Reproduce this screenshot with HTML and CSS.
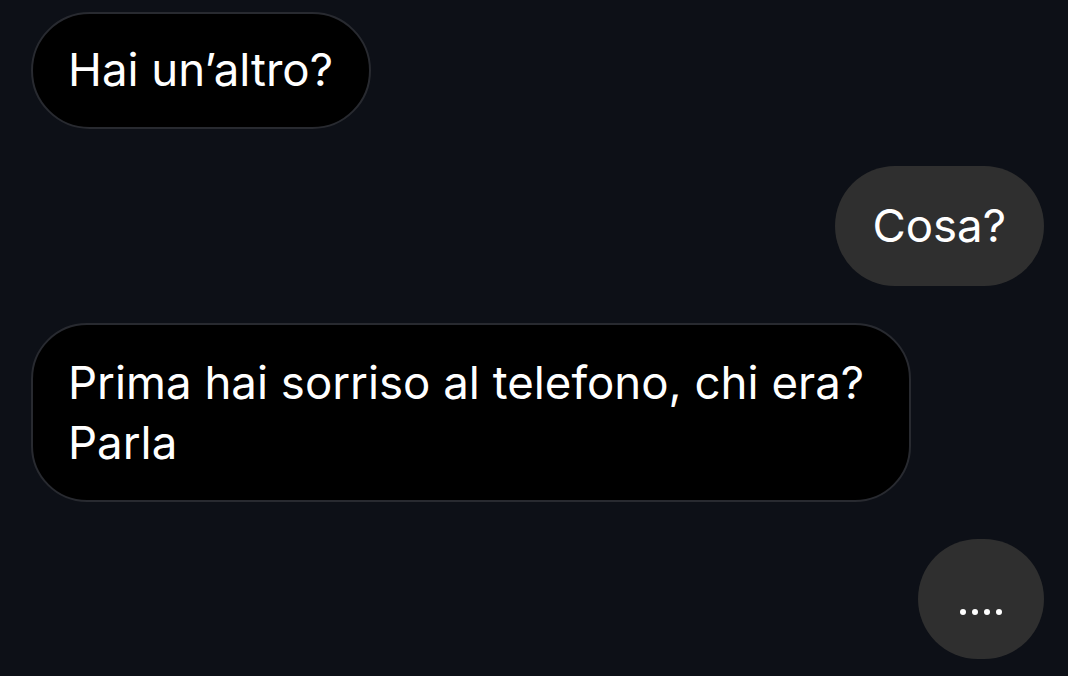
FILE: index.html
```html
<!DOCTYPE html>
<html lang="it">
  <head>
    <meta charset="UTF-8" />
    <meta name="viewport" content="width=device-width, initial-scale=1.0" />
    <title>Chat</title>
    <link rel="stylesheet" href="styles.css">
  </head>
  <body>
    <div id="thread">
      <div class="bubble in">Hai un’altro?</div>
      <div class="bubble out">Cosa?</div>
      <div class="bubble in wide">Prima hai sorriso al telefono, chi era? Parla</div>
      <div class="bubble out typing">
        <span class="dot"></span><span class="dot"></span><span class="dot"></span><span class="dot"></span>
      </div>
    </div>
  </body>
</html>
```

FILE: styles.css
```css
* {
  box-sizing: border-box;
  margin: 0;
  padding: 0;
}
body {
  width: 100vw;
  height: 100vh;
  overflow: hidden;
  background-color: #0d1017;
  font-family: Inter, Roboto, "Liberation Sans", sans-serif;
  color: #ffffff;
}

#thread {
  display: flex;
  flex-direction: column;
  gap: 37px;
  padding: 12px 24px 0 31px;
}

.bubble {
  font-size: 45.6px;
  line-height: 60px;
  border-radius: 60px;
}
.bubble.in {
  align-self: flex-start;
  background-color: #000000;
  border: 2px solid #282a30;
  padding: 26px 36px 27px 35px;
}
.bubble.wide {
  max-width: 880px;
  border-radius: 56px;
  padding: 28px 40px 27px 35px;
}
.bubble.out {
  align-self: flex-end;
  background-color: #2f2f2f;
  padding: 30px 38px 30px 37px;
}

/* typing indicator */
.typing {
  width: 126px;
  height: 120px;
  display: flex;
  justify-content: center;
  align-items: center;
  gap: 6px;
  padding: 25px 0 0 !important;
}
.dot {
  width: 6px;
  height: 6px;
  border-radius: 50%;
  background-color: #ffffff;
}
```
